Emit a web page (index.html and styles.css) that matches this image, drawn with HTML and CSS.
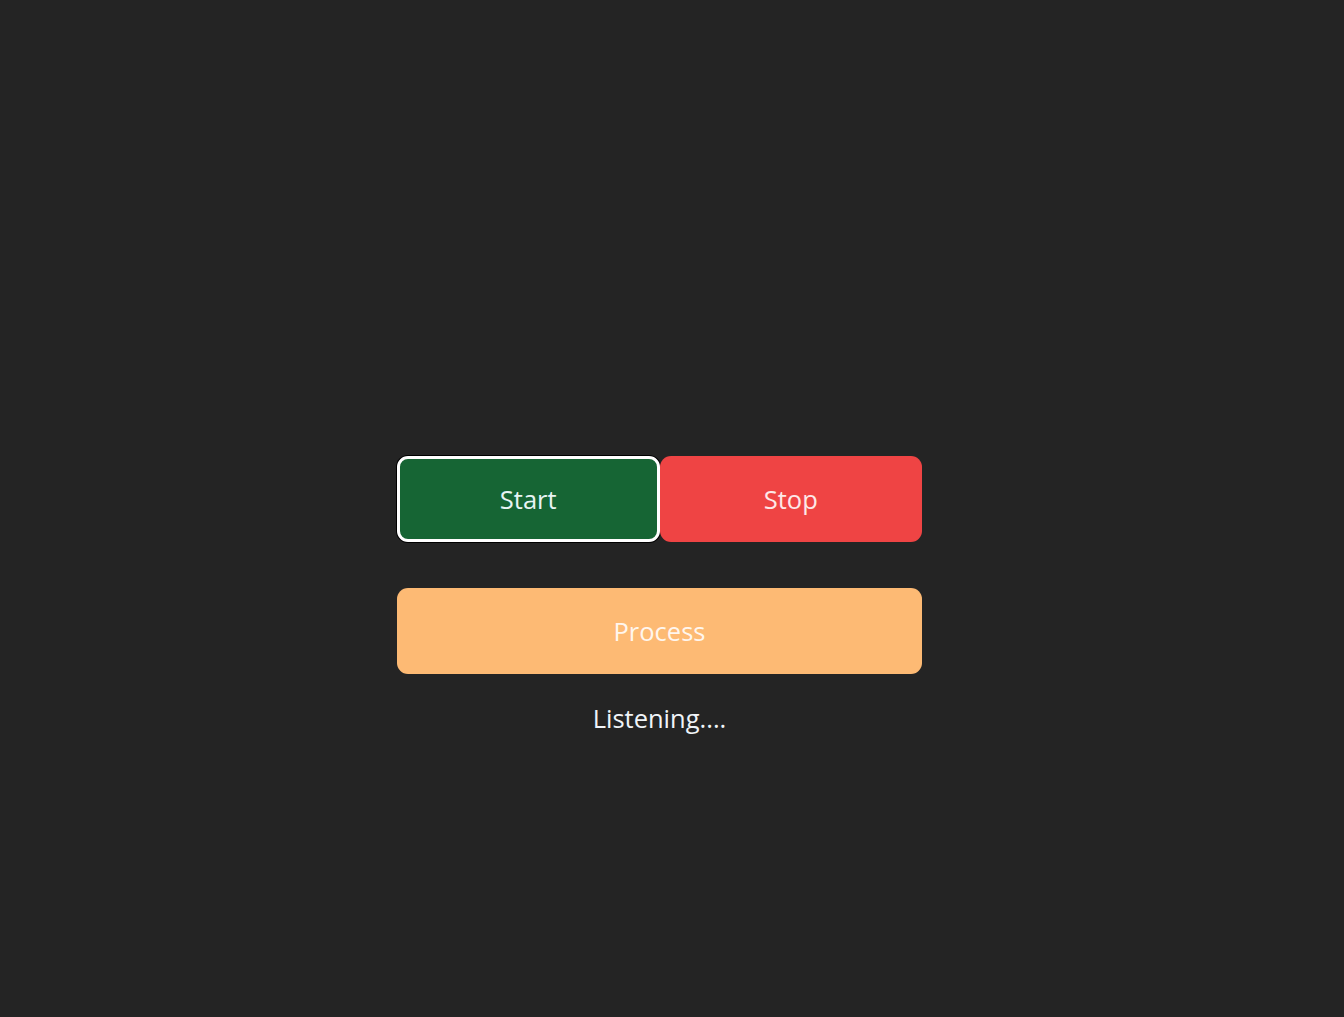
FILE: index.html
```html
<!DOCTYPE html>
<html lang="en">
<head>
<meta charset="utf-8">
<title>Recorder</title>
<link rel="stylesheet" href="styles.css">
</head>
<body>
<main class="app">
  <div class="row">
    <button class="btn btn-start">Start</button>
    <button class="btn btn-stop">Stop</button>
  </div>
  <button class="btn btn-process">Process</button>
  <p class="status">Listening....</p>
</main>
</body>
</html>
```
FILE: styles.css
```css
html, body {
  margin: 0;
  padding: 0;
  background: #242424;
  min-height: 100vh;
}
body {
  font-family: "Open Sans", "Noto Sans", sans-serif;
  color: rgba(255, 255, 255, 0.87);
}
.app {
  width: 525px;
  margin: 0 0 0 calc(50% - 275px);
  padding-top: 456px;
  display: flex;
  flex-direction: column;
  align-items: stretch;
}
.row {
  display: grid;
  grid-template-columns: repeat(2, minmax(0, 1fr));
}
.btn {
  box-sizing: border-box;
  font-family: inherit;
  font-size: 25.5px;
  color: rgba(255, 255, 255, 0.9);
  height: 86px;
  border: none;
  border-radius: 11px;
  cursor: pointer;
  padding: 0;
}
.btn-start {
  background: #166534;
  border: 3px solid #ffffff;
  box-shadow: 0 0 0 1px #000000;
  color: #e8f4f4;
}
.btn-stop {
  background: #ef4444;
  color: #fde8e8;
}
.btn-process {
  margin-top: 46px;
  background: #fdba74;
  color: #fff6ee;
}
.status {
  margin: 26px 0 0;
  text-align: center;
  font-size: 25.5px;
  line-height: 36px;
  color: #f0f4f8;
}
```
